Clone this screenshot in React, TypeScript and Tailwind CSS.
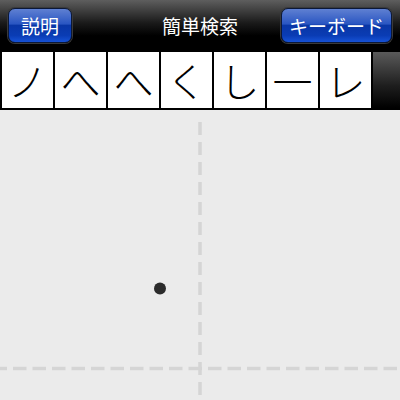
import React from "react";

const candidates = ["ノ", "へ", "へ", "く", "し", "一", "レ"];

const jp = '"Noto Sans CJK JP", "Noto Sans", sans-serif';

function BlueButton({ label, className }: { label: string; className: string }) {
  return (
    <button
      className={`h-[35px] rounded-[7px] border border-[#0b1838] bg-[linear-gradient(#5f80d2_0%,#2a56c2_45%,#0936a6_50%,#0a3cb4_80%,#1652d6_100%)] shadow-[0_0_0_1px_#3a3a3a] text-white text-[19px] leading-none ${className}`}
      style={{ fontFamily: jp }}
    >
      {label}
    </button>
  );
}

export default function App() {
  return (
    <div className="w-[400px] h-[400px] overflow-hidden bg-[#ebebeb] flex flex-col">
      {/* header */}
      <div className="h-[51px] grid grid-cols-[1fr_auto_1fr] items-center px-[8px] bg-[linear-gradient(#5e5e5e_0%,#1a1a1a_45%,#000_70%)]">
        <div className="flex justify-start">
          <BlueButton label="説明" className="w-[64px]" />
        </div>
        <div className="text-white text-[19px] leading-none" style={{ fontFamily: jp }}>
          簡単検索
        </div>
        <div className="flex justify-end">
          <BlueButton label="キーボード" className="w-[111px]" />
        </div>
      </div>

      {/* candidate strip */}
      <div className="h-[59px] bg-black flex items-stretch pl-[2px] pt-[1px] pb-[2px] gap-[2px]">
        {candidates.map((c, i) => (
          <div
            key={i}
            className="w-[51px] bg-white flex items-center justify-center text-[40px] text-black leading-none"
            style={{ fontFamily: '"Noto Sans CJK JP", sans-serif', fontWeight: 300 }}
          >
            {c}
          </div>
        ))}
        <div className="flex-1 bg-[linear-gradient(#5a5a5a_0%,#1e1e1e_60%,#000_100%)]" />
      </div>

      {/* drawing canvas */}
      <div className="flex-1 bg-[#ebebeb]">
        <svg width="400" height="290" viewBox="0 0 400 290">
          <line x1="200" y1="12" x2="200" y2="290" stroke="#d5d5d5" strokeWidth="3.5" strokeDasharray="13 7" />
          <line x1="-6.5" y1="258.5" x2="400" y2="258.5" stroke="#d5d5d5" strokeWidth="3.5" strokeDasharray="13.5 6" />
          <circle cx="160" cy="178.5" r="6" fill="#2b2b2b" />
        </svg>
      </div>
    </div>
  );
}
